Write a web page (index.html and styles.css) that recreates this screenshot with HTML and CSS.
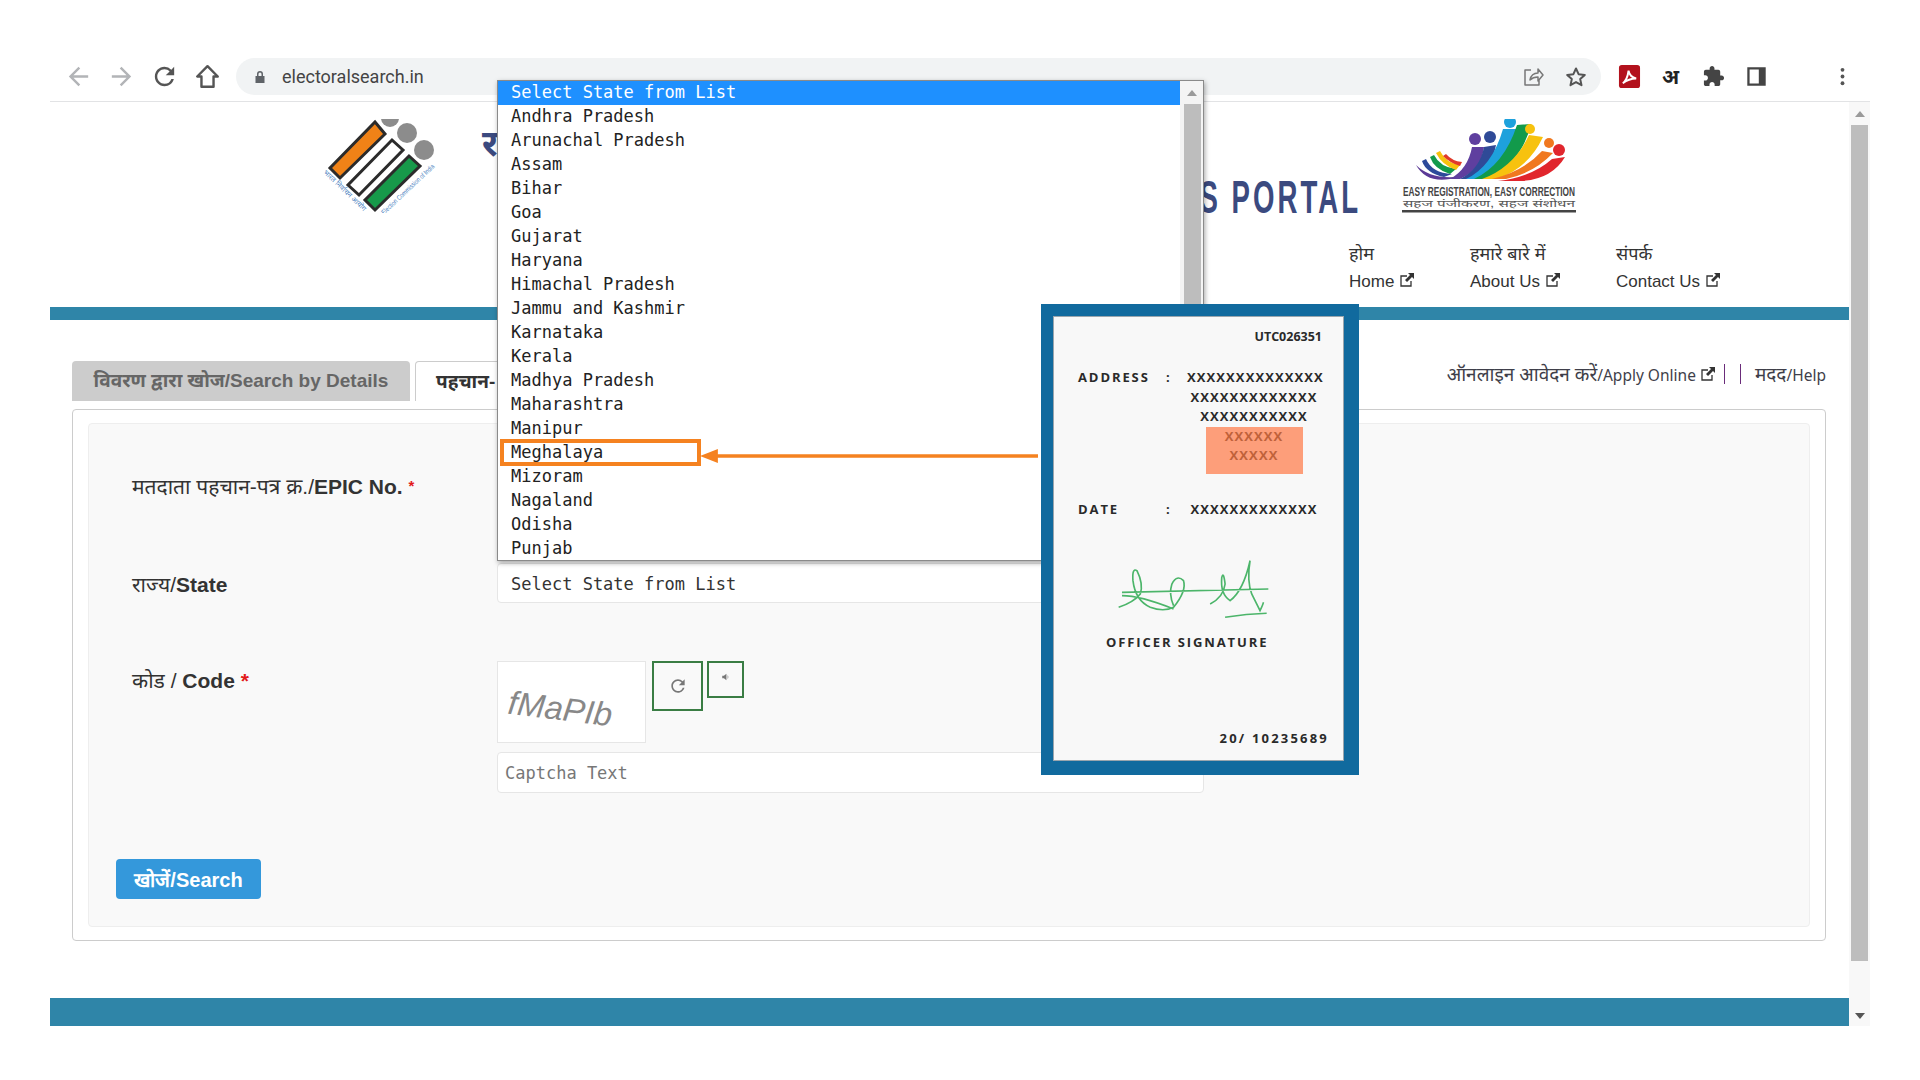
FILE: index.html
```html
<!DOCTYPE html>
<html lang="en">
<head>
    <meta charset="UTF-8">
    <title>electoralsearch.in</title>
    <link rel="stylesheet" href="styles.css">
</head>
<body>
    <div class="window">
        <div class="toolbar">
            <svg class="tool-icon faint" viewBox="0 0 24 24"><path d="M20 11H7.83l5.59-5.59L12 4l-8 8 8 8 1.41-1.41L7.83 13H20v-2z"/></svg>
            <svg class="tool-icon faint" viewBox="0 0 24 24"><path d="M4 11h12.17l-5.59-5.59L12 4l8 8-8 8-1.41-1.41L16.17 13H4v-2z"/></svg>
            <svg class="tool-icon" viewBox="0 0 24 24"><path d="M17.65 6.35A7.958 7.958 0 0012 4c-4.42 0-7.99 3.58-7.99 8s3.57 8 7.99 8c3.73 0 6.84-2.55 7.73-6h-2.08A5.99 5.99 0 0112 18c-3.31 0-6-2.69-6-6s2.69-6 6-6c1.66 0 3.14.69 4.22 1.78L13 11h7V4l-2.35 2.35z"/></svg>
            <svg class="tool-icon" viewBox="0 0 24 24"><path class="outline" d="M12 3.500L3.500 12H7v8.500h10V12h3.500z"/></svg>
            <div class="omnibox">
                <svg class="lock" viewBox="0 0 12 14"><path d="M3 6V4a3 3 0 016 0v2h1.500v7h-9V6zm1.500 0h3V4a1.500 1.500 0 00-3 0z"/></svg>
                <span class="url">electoralsearch.in</span>
                <svg class="omni-icon share" viewBox="0 0 24 24"><path class="outline thin" d="M10 5H4v15h14v-5M9 15c1-5 4-7 8-7V4l5 6-5 6v-4c-3 0-6 1-8 3z"/></svg>
                <svg class="omni-icon" viewBox="0 0 24 24"><path class="outline" d="M12 3.500l2.600 5.700 6.200.7-4.600 4.200 1.300 6.100-5.500-3.100-5.500 3.100 1.300-6.100-4.600-4.200 6.200-.7z"/></svg>
            </div>
            <div class="extensions">
                <svg class="ext-icon" viewBox="0 0 22 24"><rect width="22" height="24" rx="3" fill="#b3121d"/><path d="M4 19c3-2 5-6 6-13 1 5 3 7 8 8-5 0-9 1-14 5z" fill="none" stroke="#fff" stroke-width="2"/></svg>
                <span class="ext-letter">अ</span>
                <svg class="ext-icon" viewBox="0 0 24 24"><path fill="#444" d="M20.500 11H19V7c0-1.100-.9-2-2-2h-4V3.500C13 2.120 11.880 1 10.500 1S8 2.120 8 3.500V5H4c-1.100 0-1.990.9-1.990 2v3.800H3.500c1.490 0 2.700 1.210 2.700 2.700s-1.210 2.700-2.700 2.700H2V20c0 1.100.9 2 2 2h3.800v-1.500c0-1.490 1.210-2.700 2.700-2.700 1.490 0 2.700 1.210 2.700 2.700V22H17c1.100 0 2-.9 2-2v-4h1.500c1.380 0 2.500-1.120 2.500-2.500S21.880 11 20.500 11z"/></svg>
                <svg class="ext-icon" viewBox="0 0 20 20"><path fill="#444" fill-rule="evenodd" d="M2 2h16v16H2zM4 4v12h8V4z"/></svg>
                <span class="ext-gap"></span>
                <svg class="ext-icon" viewBox="0 0 24 24"><circle cx="12" cy="5" r="2" fill="#555"/><circle cx="12" cy="12" r="2" fill="#555"/><circle cx="12" cy="19" r="2" fill="#555"/></svg>
            </div>
        </div>

        <div class="viewport">
            <div class="page">
                <header class="site-header">
                    <div class="brand-row">
                        <svg class="eci-logo" viewBox="0 0 114 94">
                            <defs>
                                <path id="eciLeft" d="M1 54 L43 94"/>
                                <path id="eciRight" d="M62 96 L114 47"/>
                            </defs>
                            <circle cx="68" cy="-1" r="9" fill="#8c8c8c"/>
                            <circle cx="85" cy="14" r="10" fill="#8c8c8c"/>
                            <circle cx="102" cy="31" r="10" fill="#8c8c8c"/>
                            <path d="M53 3L63 15 18 59 8 49z" fill="#f08217" stroke="#2b2b2b" stroke-width="3"/>
                            <path d="M70 21L81 31 37 76 26 66z" fill="#fff" stroke="#2b2b2b" stroke-width="3"/>
                            <path d="M87 37L98 47 53 91 43 81z" fill="#17994a" stroke="#2b2b2b" stroke-width="3"/>
                            <text class="eci-text" textLength="56" lengthAdjust="spacingAndGlyphs"><textPath href="#eciLeft">भारत निर्वाचन आयोग</textPath></text>
                            <text class="eci-text" textLength="70" lengthAdjust="spacingAndGlyphs"><textPath href="#eciRight">Election Commission of India</textPath></text>
                        </svg>
                        <div class="site-title">
                            <div class="title-hi">रा</div>
                            <div class="title-en">S PORTAL</div>
                        </div>
                        <svg class="easy-logo" viewBox="0 0 174 94">
                            <path d="M14 46Q30 62 62 57L48 60Q24 64 14 46z" fill="#5b3a96"/>
                            <path d="M24 40Q30 54 50 55L42 58Q24 54 20 42z" fill="#2c4a9a"/>
                            <path d="M32 36Q38 48 54 50L48 55Q32 50 28 38z" fill="#129a4b"/>
                            <path d="M38 32Q44 44 58 46L54 51Q40 46 34 34z" fill="#f7c20e"/>
                            <path d="M44 35Q50 42 60 43L58 47Q48 44 41 37z" fill="#e03a2a"/>
                            <path d="M48 60Q66 50 70 28L82 28Q80 50 58 60z" fill="#5f3f9f"/>
                            <path d="M58 60Q78 50 82 28L94 26Q90 50 66 60z" fill="#2f4a97"/>
                            <path d="M64 60Q90 48 101 10L115 10Q106 48 74 60z" fill="#1ea1dc"/>
                            <path d="M72 60Q102 46 115 6L129 5Q120 44 84 60z" fill="#129a4b"/>
                            <path d="M80 60Q112 48 127 16L141 18Q126 50 94 60z" fill="#f7c20e"/>
                            <path d="M90 60Q122 52 140 32L151 34Q132 54 104 60z" fill="#f0781f"/>
                            <path d="M96 62Q130 58 150 40L163 38Q150 60 120 62z" fill="#e1262d"/>
                            <circle cx="73" cy="20" r="6" fill="#5f3f9f"/>
                            <circle cx="88" cy="18" r="6" fill="#2f4a97"/>
                            <circle cx="108" cy="3" r="6" fill="#1ea1dc"/>
                            <circle cx="128" cy="10" r="5" fill="#f7c20e"/>
                            <circle cx="147" cy="24" r="5" fill="#f0781f"/>
                            <circle cx="157" cy="31" r="6" fill="#e1262d"/>
                            <text class="easy-en" x="1" y="77" textLength="172" lengthAdjust="spacingAndGlyphs">EASY REGISTRATION, EASY CORRECTION</text>
                            <text class="easy-hi" x="1" y="88" textLength="172" lengthAdjust="spacingAndGlyphs">सहज पंजीकरण, सहज संशोधन</text>
                            <rect y="91" width="174" height="2.500" fill="#444"/>
                        </svg>
                    </div>
                    <nav class="site-nav">
                        <a class="nav-item"><span class="nav-hi">होम</span><span>Home <svg class="ext-link" viewBox="0 0 16 16"><use href="#extLink"/></svg></span></a>
                        <a class="nav-item"><span class="nav-hi">हमारे बारे में</span><span>About Us <svg class="ext-link" viewBox="0 0 16 16"><use href="#extLink"/></svg></span></a>
                        <a class="nav-item"><span class="nav-hi">संपर्क</span><span>Contact Us <svg class="ext-link" viewBox="0 0 16 16"><use href="#extLink"/></svg></span></a>
                    </nav>
                </header>
                <div class="band"></div>

                <div class="content">
                    <div class="tab-row">
                        <div class="tab tab-off">विवरण द्वारा खोज/Search by Details</div>
                        <div class="tab tab-on">पहचान-</div>
                        <div class="help-links">
                            <span><span class="help-hi">ऑनलाइन आवेदन करें</span>/Apply Online <svg class="ext-link" viewBox="0 0 16 16"><use href="#extLink"/></svg></span>
                            <i class="sep"></i>
                            <i class="sep light"></i>
                            <span><span class="help-hi">मदद</span>/Help</span>
                        </div>
                    </div>
                    <div class="panel">
                        <form class="well">
                            <div class="form-row first">
                                <label class="form-label">मतदाता पहचान-पत्र क्र./<b>EPIC No.</b> <em class="req small">*</em></label>
                                <div class="field"></div>
                            </div>
                            <div class="form-row">
                                <label class="form-label">राज्य/<b>State</b></label>
                                <div class="field">Select State from List</div>
                            </div>
                            <div class="form-row">
                                <label class="form-label top">कोड / <b>Code</b> <em class="req">*</em></label>
                                <div class="captcha">
                                    <div class="captcha-top">
                                        <div class="captcha-img"><span>fMaPIb</span></div>
                                        <div class="captcha-btn reload">
                                            <svg viewBox="0 0 24 24"><path d="M17.650 6.350A7.958 7.958 0 0012 4c-4.420 0-7.990 3.580-7.990 8s3.570 8 7.990 8c3.730 0 6.840-2.550 7.730-6h-2.080A5.990 5.990 0 0112 18c-3.310 0-6-2.690-6-6s2.690-6 6-6c1.660 0 3.140.69 4.220 1.780L13 11h7V4l-2.350 2.350z"/></svg>
                                        </div>
                                        <div class="captcha-btn audio">
                                            <svg viewBox="0 0 24 24"><path d="M3 9v6h4l6 5V4L7 9zM16 7c2 3 2 7 0 10z"/></svg>
                                        </div>
                                    </div>
                                    <div class="field captcha-input">Captcha Text</div>
                                </div>
                            </div>
                            <button class="search-btn" type="button">खोजें/Search</button>
                        </form>
                    </div>
                </div>
                <div class="band bottom"></div>
            </div>

            <div class="page-scroll">
                <span class="arrow-up"></span>
                <span class="thumb"></span>
                <span class="arrow-down"></span>
            </div>
        </div>
    </div>

    <!-- open select list, sits over the page -->
    <div class="state-list">
        <ul>
            <li class="active">Select State from List</li>
            <li>Andhra Pradesh</li>
            <li>Arunachal Pradesh</li>
            <li>Assam</li>
            <li>Bihar</li>
            <li>Goa</li>
            <li>Gujarat</li>
            <li>Haryana</li>
            <li>Himachal Pradesh</li>
            <li>Jammu and Kashmir</li>
            <li>Karnataka</li>
            <li>Kerala</li>
            <li>Madhya Pradesh</li>
            <li>Maharashtra</li>
            <li>Manipur</li>
            <li>Meghalaya</li>
            <li>Mizoram</li>
            <li>Nagaland</li>
            <li>Odisha</li>
            <li>Punjab</li>
        </ul>
        <div class="list-scroll">
            <span class="arrow-up"></span>
            <span class="thumb"></span>
        </div>
    </div>

    <!-- annotation over the list -->
    <div class="mark-box"></div>
    <svg class="mark-arrow" viewBox="0 0 340 16">
        <path d="M340 8H12" stroke="#f58220" stroke-width="3.500"/>
        <path d="M0 8L18 1V15z" fill="#f58220"/>
    </svg>

    <div class="epic-card">
        <div class="card-inner">
            <div class="card-id">UTC026351</div>
            <div class="card-row address">
                <span class="card-key">ADDRESS</span>
                <span class="card-key">:</span>
                <div class="card-val">
                    XXXXXXXXXXXXXX<br>XXXXXXXXXXXXX<br>XXXXXXXXXXX
                    <div class="card-hl">XXXXXX<br>XXXXX</div>
                </div>
            </div>
            <div class="card-row date">
                <span class="card-key">DATE</span>
                <span class="card-key">:</span>
                <div class="card-val">XXXXXXXXXXXXX</div>
            </div>
            <svg class="signature" viewBox="260 795 460 180">
                <path d="M275 895L715 885M265 940Q310 925 330 900Q340 870 320 830Q305 820 308 860Q315 920 360 940Q400 955 430 940Q470 890 460 860Q440 840 425 870Q415 900 430 935M275 905Q330 905 430 945M540 930Q580 910 585 870Q580 830 575 850Q570 900 600 920Q640 890 660 800Q650 860 665 900L690 950Q700 930 700 925M585 970Q650 960 710 958"/>
            </svg>
            <div class="card-sign">OFFICER SIGNATURE</div>
            <div class="card-no">20/ 10235689</div>
        </div>
    </div>

    <svg class="sprite" width="0" height="0">
        <symbol id="extLink" viewBox="0 0 16 16">
            <path d="M12 9v5H2V4h6" fill="none" stroke="currentColor" stroke-width="1.300"/>
            <path d="M9 1h6v6l-2-2-5 5-2-2 5-5z" fill="currentColor"/>
        </symbol>
    </svg>
</body>
</html>
```

FILE: styles.css
```css
html, body {
    margin: 0;
    padding: 0;
    background: #fff;
}
body {
    width: 1920px;
    height: 1080px;
    overflow: hidden;
    position: relative;
    font-family: "Liberation Sans", "Noto Sans", sans-serif;
    color: #333;
}
.window {
    margin-left: 50px;
    width: 1820px;
}

/* browser toolbar */
.toolbar {
    height: 49px;
    padding-top: 52px;
    display: flex;
    align-items: center;
    border-bottom: 1px solid #e2e3e5;
    box-sizing: content-box;
}
.tool-icon {
    width: 29px;
    height: 29px;
    margin-left: 14px;
    fill: #555;
    flex: none;
}
.tool-icon.faint {
    fill: #b2b4b7;
}
.outline {
    fill: none;
    stroke: #555;
    stroke-width: 2;
    stroke-linejoin: round;
}
.outline.thin {
    stroke: #777;
    stroke-width: 1.500;
}
.omnibox {
    margin-left: 14px;
    width: 1365px;
    height: 37px;
    border-radius: 19px;
    background: #f1f3f4;
    display: flex;
    align-items: center;
    flex: none;
}
.lock {
    width: 12px;
    height: 14px;
    margin-left: 18px;
    fill: #5f6368;
}
.url {
    margin-left: 16px;
    font-family: Roboto, sans-serif;
    font-size: 18px;
    color: #444;
}
.omni-icon {
    width: 24px;
    height: 24px;
    margin-left: 31px;
}
.omni-icon.share {
    margin-left: auto;
}
.omni-icon:last-child {
    margin-right: 13px;
    margin-left: 19px;
}
.extensions {
    display: flex;
    align-items: center;
    margin-left: 17px;
}
.ext-icon {
    width: 23px;
    height: 23px;
    flex: none;
}
.ext-letter {
    width: 23px;
    margin-left: 18px;
    font-size: 20px;
    font-weight: bold;
    color: #222;
    text-align: center;
}
.ext-icon + .ext-icon,
.ext-letter + .ext-icon {
    margin-left: 20px;
}
.ext-gap {
    width: 63px;
}

/* page and its scrollbar */
.viewport {
    display: flex;
    height: 924px;
}
.page {
    width: 1799px;
    flex: none;
}
.page-scroll {
    width: 21px;
    position: relative;
    background: #f8f8f8;
}
.page-scroll .thumb {
    position: absolute;
    left: 2px;
    right: 2px;
    top: 23px;
    height: 836px;
    background: #bdbdbd;
}
.arrow-up,
.arrow-down {
    position: absolute;
    left: 50%;
    margin-left: -5px;
    border-left: 5px solid transparent;
    border-right: 5px solid transparent;
}
.arrow-up {
    top: 9px;
    border-bottom: 6px solid #9a9a9a;
}
.arrow-down {
    bottom: 7px;
    border-top: 6px solid #555;
}

/* site header */
.site-header {
    height: 205px;
    padding-top: 17px;
    box-sizing: border-box;
}
.brand-row {
    display: flex;
    height: 94px;
    padding-left: 272px;
}
.eci-logo {
    width: 114px;
    height: 94px;
    flex: none;
    overflow: hidden;
}
.eci-text {
    font-size: 7px;
    fill: #4a7fc0;
}
.site-title {
    width: 879px;
    margin-left: 46px;
    flex: none;
    color: #3b4a7f;
}
.title-hi {
    font-size: 36px;
    font-weight: bold;
    line-height: 50px;
    white-space: nowrap;
    height: 61px;
}
.title-en {
    font-family: "Liberation Sans Narrow", "Liberation Sans", sans-serif;
    font-size: 46px;
    font-weight: bold;
    line-height: 34px;
    letter-spacing: 5px;
    text-align: right;
    white-space: nowrap;
    transform: scaleX(.6);
    transform-origin: right center;
}
.easy-logo {
    width: 174px;
    height: 94px;
    margin-left: 41px;
    flex: none;
}
.easy-en {
    font-family: "Liberation Sans Narrow", "Liberation Sans", sans-serif;
    font-size: 12px;
    font-weight: bold;
    fill: #444;
}
.easy-hi {
    font-size: 10px;
    fill: #555;
}
.site-nav {
    display: grid;
    grid-template-columns: 121px 146px auto;
    padding-left: 1299px;
    margin-top: 31px;
    font-size: 17px;
}
.nav-item {
    display: flex;
    flex-direction: column;
    gap: 6px;
    line-height: 21px;
}
.nav-hi {
    font-size: 18px;
}
.ext-link {
    width: 16px;
    height: 16px;
    vertical-align: -1px;
    color: #333;
}
.sprite {
    position: absolute;
}
.band {
    height: 13px;
    background: #2f85a8;
}
.band.bottom {
    height: 28px;
    margin-top: 57px;
}

/* tabs */
.content {
    padding: 41px 23px 0 22px;
}
.tab-row {
    display: flex;
    align-items: flex-start;
    height: 40px;
    margin-bottom: 8px;
}
.tab {
    height: 40px;
    line-height: 40px;
    border-radius: 4px 4px 0 0;
    box-sizing: border-box;
    white-space: nowrap;
    font-size: 19px;
    font-weight: bold;
}
.tab-off {
    width: 338px;
    background: #ccc;
    color: #666;
    text-align: center;
}
.tab-on {
    width: 300px;
    margin-left: 5px;
    padding-left: 20px;
    border: 1px solid #ccc;
    border-bottom: 0;
}
.help-links {
    margin-left: auto;
    display: flex;
    align-items: center;
    height: 26px;
    font-family: "Noto Sans", "Liberation Sans", sans-serif;
    font-size: 15.500px;
    color: #3f3f4a;
}
.help-hi {
    font-size: 19px;
}
.sep {
    width: 1px;
    height: 20px;
    margin-left: 8px;
    background: #6a2c7a;
}
.sep.light {
    margin-left: 15px;
    margin-right: 14px;
}

/* form */
.panel {
    height: 532px;
    padding: 13px 15px;
    border: 1px solid #ccc;
    border-radius: 4px;
    box-sizing: border-box;
}
.well {
    height: 504px;
    padding: 41px 27px 0;
    background: #f9f9f9;
    border: 1px solid #eee;
    border-radius: 4px;
    box-sizing: border-box;
}
.form-row {
    display: grid;
    grid-template-columns: 366px 707px;
    align-items: center;
    padding-left: 15px;
    margin-top: 58px;
}
.form-row.first {
    margin-top: 0;
}
.form-label {
    font-size: 21px;
    color: #333;
    margin-left: 1px;
    padding-top: 2px;
}
.form-label.top {
    align-self: start;
    padding-top: 5px;
}
.req {
    font-style: normal;
    font-weight: bold;
    color: #e21a1a;
}
.req.small {
    font-size: 15px;
    vertical-align: 3px;
}
.field {
    height: 40px;
    padding-left: 13px;
    background: #fff;
    border: 1px solid #e6e6e6;
    border-radius: 4px;
    box-sizing: border-box;
    font-family: "DejaVu Sans Mono", monospace;
    font-size: 17px;
    line-height: 40px;
    color: #333;
}
.captcha-top {
    display: flex;
    align-items: flex-start;
}
.captcha-img {
    width: 149px;
    height: 82px;
    background: #fff;
    border: 1px solid #e6e6e6;
    box-sizing: border-box;
    font-size: 33px;
    font-style: italic;
    color: #888;
    overflow: hidden;
}
.captcha-img span {
    display: inline-block;
    margin: 28px 0 0 10px;
    transform: rotate(7deg);
}
.captcha-btn {
    border: 2px solid #3a7d44;
    box-sizing: border-box;
    display: flex;
    align-items: center;
    justify-content: center;
    fill: #777;
}
.captcha-btn.reload {
    width: 51px;
    height: 50px;
    margin-left: 6px;
}
.captcha-btn.reload svg {
    width: 20px;
    height: 20px;
}
.captcha-btn.audio {
    width: 37px;
    height: 37px;
    margin-left: 4px;
    padding-bottom: 6px;
}
.captcha-btn.audio svg {
    width: 10px;
    height: 10px;
}
.captcha-input {
    height: 41px;
    margin-top: 9px;
    padding-left: 7px;
    color: #777;
}
.search-btn {
    display: block;
    width: 145px;
    height: 40px;
    margin-top: 66px;
    background: #3498db;
    border: 0;
    border-radius: 4px;
    color: #fff;
    font-family: "Liberation Sans", sans-serif;
    font-size: 20px;
    font-weight: bold;
}

/* open select list */
.state-list {
    position: absolute;
    left: 497px;
    top: 80px;
    width: 707px;
    height: 481px;
    display: flex;
    background: #fff;
    border: 1px solid #8a8a8a;
    box-sizing: border-box;
    box-shadow: 1px 2px 5px rgba(0, 0, 0, .35);
}
.state-list ul {
    flex: 1;
    margin: 0;
    padding: 0;
    list-style: none;
    font-family: "DejaVu Sans Mono", monospace;
    font-size: 17px;
    line-height: 23px;
    color: #222;
}
.state-list li {
    height: 24px;
    padding-left: 13px;
}
.state-list li.active {
    background: #1e90ff;
    color: #fff;
}
.list-scroll {
    width: 23px;
    position: relative;
    background: #f4f4f4;
}
.list-scroll .thumb {
    position: absolute;
    left: 4px;
    right: 2px;
    top: 23px;
    bottom: 0;
    background: #bdbdbd;
}

/* orange marker */
.mark-box {
    position: absolute;
    left: 500px;
    top: 439px;
    width: 201px;
    height: 27px;
    border: 4px solid #f58220;
    box-sizing: border-box;
}
.mark-arrow {
    position: absolute;
    left: 700px;
    top: 448px;
    width: 338px;
    height: 16px;
}

/* card image */
.epic-card {
    position: absolute;
    left: 1041px;
    top: 304px;
    width: 318px;
    height: 471px;
    padding: 12px 15px 14px 12px;
    background: #116a9e;
    box-sizing: border-box;
}
.card-inner {
    height: 100%;
    padding: 10px 14px 0 24px;
    background: #f8f8f8;
    border: 1px solid #9aa5ad;
    box-sizing: border-box;
    font-family: "Open Sans", sans-serif;
    font-weight: bold;
    font-size: 13px;
    color: #2a2a2a;
}
.card-id {
    line-height: 20px;
    font-size: 12.500px;
    text-align: right;
    padding-right: 7px;
}
.card-row {
    display: grid;
    grid-template-columns: 88px 21px 134px;
    line-height: 19.500px;
}
.card-row.address {
    margin-top: 21px;
}
.card-row.date {
    margin-top: 26px;
}
.card-key {
    letter-spacing: 1.900px;
}
.card-val {
    text-align: center;
    letter-spacing: 1.100px;
    white-space: nowrap;
}
.card-hl {
    width: 97px;
    height: 47px;
    margin: 0 auto;
    background: #fd9e7a;
    color: #c0623a;
}
.signature {
    display: block;
    width: 153px;
    height: 60px;
    margin: 40px 0 0 39px;
    fill: none;
    stroke: #4cb56a;
    stroke-width: 5;
}
.card-sign {
    margin: 13px 0 0 28px;
    line-height: 20px;
    letter-spacing: 1.900px;
    white-space: nowrap;
}
.card-no {
    margin-top: 76px;
    line-height: 20px;
    letter-spacing: 2.200px;
    text-align: right;
    white-space: nowrap;
}
```
